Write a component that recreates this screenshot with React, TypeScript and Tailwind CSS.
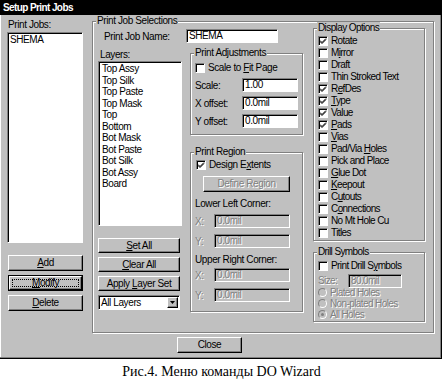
import React from "react";

const raised =
  "bg-[#c0c0c0] border border-t-white border-l-white border-r-black border-b-black shadow-[inset_-1px_-1px_0_#808080]";
const sunken =
  "border border-t-[#808080] border-l-[#808080] border-r-white border-b-white shadow-[inset_1px_1px_0_#000]";
const etched = "border border-[#808080] shadow-[inset_1px_1px_0_#fff,1px_1px_0_#fff]";
const dim = "text-[#808080] [text-shadow:1px_1px_0_#fff]";

const U = ({ children }: { children: React.ReactNode }) => (
  <span className="underline underline-offset-[1px] decoration-1">{children}</span>
);

type Kids = { children?: React.ReactNode; className?: string };

const Group = ({ title, className = "", children }: Kids & { title: string }) => (
  <div className={`relative ${etched} ${className}`}>
    <span className="absolute -top-[7px] left-[3px] bg-[#c0c0c0] px-[1px] leading-[12px]">{title}</span>
    {children}
  </div>
);

const Btn = ({ className = "", children, disabled }: Kids & { disabled?: boolean }) => (
  <div className={`${raised} flex items-center justify-center leading-[12px] ${disabled ? dim : ""} ${className}`}>
    <span className="whitespace-nowrap">{children}</span>
  </div>
);

const Box = ({ checked }: { checked?: boolean }) => (
  <span className={`w-[10px] h-[10px] shrink-0 bg-white ${sunken} flex items-center justify-center`}>
    {checked && (
      <svg width="8" height="8" viewBox="0 0 8 8">
        <path d="M1 3.5 L3 5.5 L7 1.5 M1 4.5 L3 6.5 L7 2.5" stroke="#000" strokeWidth="1" fill="none" />
      </svg>
    )}
  </span>
);

const Check = ({ checked, children, className = "" }: Kids & { checked?: boolean }) => (
  <div className={`flex items-center h-[12px] leading-[12px] ${className}`}>
    <Box checked={checked} />
    <span className="ml-[3px] whitespace-nowrap">{children}</span>
  </div>
);

const Field = ({ value, className = "", disabled }: { value: string; className?: string; disabled?: boolean }) => (
  <div
    className={`h-[14px] ${sunken} ${disabled ? "bg-[#c0c0c0] " + dim : "bg-white"} pl-[2px] leading-[12px] ${className}`}
  >
    {value}
  </div>
);

const Radio = ({ on, children }: Kids & { on?: boolean }) => (
  <div className="flex items-center h-[11px] leading-[11px]">
    <span className="w-[9px] h-[9px] shrink-0 rounded-full border border-t-[#808080] border-l-[#808080] border-r-white border-b-white bg-[#c0c0c0] flex items-center justify-center">
      {on && <span className="w-[3px] h-[3px] rounded-full bg-[#808080]" />}
    </span>
    <span className={`ml-[3px] whitespace-nowrap ${dim}`}>{children}</span>
  </div>
);

const layers = [
  "Top Assy",
  "Top Silk",
  "Top Paste",
  "Top Mask",
  "Top",
  "Bottom",
  "Bot Mask",
  "Bot Paste",
  "Bot Silk",
  "Bot Assy",
  "Board",
];

const options: [boolean, React.ReactNode][] = [
  [true, "Rotate"],
  [false, <>M<U>i</U>rror</>],
  [false, "Draft"],
  [false, "Thin Stroked Text"],
  [true, <>R<U>e</U>fDes</>],
  [true, <><U>T</U>ype</>],
  [true, "Value"],
  [true, <><U>P</U>ads</>],
  [false, <><U>V</U>ias</>],
  [false, <>Pad/Via <U>H</U>oles</>],
  [false, "Pick and Place"],
  [false, <><U>G</U>lue Dot</>],
  [false, <><U>K</U>eepout</>],
  [false, <>C<U>u</U>touts</>],
  [false, <>C<U>o</U>nnections</>],
  [false, "No Mt Hole Cu"],
  [false, "Titles"],
];

export default function App() {
  return (
    <div className="w-[443px] h-[390px] bg-white font-['Liberation_Sans',Arial,sans-serif] text-[10px] tracking-[-0.4px] text-black">
      <div className="w-[442px] h-[359px] bg-[#c0c0c0] border-r border-b border-black shadow-[inset_-1px_-1px_0_#808080,inset_1px_0_0_#fff] flex flex-col">
        <div className="h-[15px] bg-black text-white font-bold pl-[3px] leading-[15px] tracking-[-0.6px]">
          Setup Print Jobs
        </div>

        <div className="flex">
          {/* print jobs column */}
          <div className="ml-[7px] w-[76px] flex flex-col">
            <div className="mt-[4px] h-[12px] leading-[12px] pl-[1px]">Print Jobs:</div>
            <div className={`mt-[1px] h-[211px] bg-white ${sunken} pl-[2px] pt-[1px] leading-[12px]`}>SHEMA</div>
            <Btn className="mt-[12px] h-[16px] ml-[1px]">
              <U>A</U>dd
            </Btn>
            <div className="mt-[4px] h-[16px] ml-[1px] border border-black">
              <div className={`${raised} h-full p-[2px]`}>
                <div className="h-full border border-dotted border-black flex items-center justify-center leading-[10px]">
                  <span>
                    <U>M</U>odify
                  </span>
                </div>
              </div>
            </div>
            <Btn className="mt-[4px] h-[16px] ml-[1px]">
              <U>D</U>elete
            </Btn>
          </div>

          {/* print job selections */}
          <Group title="Print Job Selections" className="ml-[9px] mt-[6px] w-[342px] h-[312px]">
            <div className="flex">
              <div className="ml-[5px] w-[205px] flex flex-col">
                <div className="mt-[7px] h-[14px] flex items-center">
                  <span className="w-[88px] pl-[6px]">Print Job Name:</span>
                  <Field value="SHEMA" className="w-[92px]" />
                </div>
                <div className="flex">
                  <div className="w-[84px] flex flex-col">
                    <div className="mt-[6px] h-[12px] leading-[12px] pl-[2px]">Layers:</div>
                    <div className={`h-[165px] bg-white ${sunken} pl-[3px] pt-[1px] leading-[11.5px]`}>
                      {layers.map((l) => (
                        <div key={l}>{l}</div>
                      ))}
                    </div>
                    <Btn className="mt-[12px] h-[15px] w-[82px]">
                      <U>S</U>et All
                    </Btn>
                    <Btn className="mt-[4px] h-[15px] w-[82px]">
                      <U>C</U>lear All
                    </Btn>
                    <Btn className="mt-[4px] h-[15px] w-[82px]">
                      Apply <U>L</U>ayer Set
                    </Btn>
                    <div className={`mt-[4px] h-[15px] w-[82px] bg-white ${sunken} flex items-center pl-[2px]`}>
                      <span className="flex-1 leading-[12px]">All Layers</span>
                      <span className={`${raised} w-[11px] h-[11px] mr-[1px] flex items-center justify-center`}>
                        <svg width="5" height="3" viewBox="0 0 5 3">
                          <path d="M0 0 H5 L2.5 3 Z" fill="#000" />
                        </svg>
                      </span>
                    </div>
                  </div>

                  <div className="ml-[8px] w-[113px] flex flex-col">
                    <Group title="Print Adjustments" className="mt-[10px] h-[82px]">
                      <div className="pl-[4px] flex flex-col">
                        <Check className="mt-[8px]">
                          Scale to <U>F</U>it Page
                        </Check>
                        <div className="mt-[4px] flex items-center h-[14px]">
                          <span className="w-[47px]">Scale:</span>
                          <Field value="1.00" className="w-[56px]" />
                        </div>
                        <div className="mt-[4px] flex items-center h-[14px]">
                          <span className="w-[47px]">X offset:</span>
                          <Field value="0.0mil" className="w-[56px]" />
                        </div>
                        <div className="mt-[4px] flex items-center h-[14px]">
                          <span className="w-[47px]">Y offset:</span>
                          <Field value="0.0mil" className="w-[56px]" />
                        </div>
                      </div>
                    </Group>
                    <Group title="Print Region" className="mt-[17px] h-[160px]">
                      <div className="pl-[4px] flex flex-col">
                        <Check checked className="mt-[6px] ml-[1px]">
                          Design E<U>x</U>tents
                        </Check>
                        <Btn disabled className="mt-[5px] ml-[8px] w-[87px] h-[16px]">
                          Define Region
                        </Btn>
                        <div className="mt-[6px] h-[12px] leading-[12px]">Lower Left Corner:</div>
                        <div className="mt-[4px] flex items-center h-[14px]">
                          <span className={`w-[19px] ${dim}`}>X:</span>
                          <Field disabled value="0.0mil" className="w-[76px]" />
                        </div>
                        <div className="mt-[6px] flex items-center h-[14px]">
                          <span className={`w-[19px] ${dim}`}>Y:</span>
                          <Field disabled value="0.0mil" className="w-[76px]" />
                        </div>
                        <div className="mt-[6px] h-[12px] leading-[12px]">Upper Right Corner:</div>
                        <div className="mt-[2px] flex items-center h-[14px]">
                          <span className={`w-[19px] ${dim}`}>X:</span>
                          <Field disabled value="0.0mil" className="w-[76px]" />
                        </div>
                        <div className="mt-[6px] flex items-center h-[14px]">
                          <span className={`w-[19px] ${dim}`}>Y:</span>
                          <Field disabled value="0.0mil" className="w-[76px]" />
                        </div>
                      </div>
                    </Group>
                  </div>
                </div>
              </div>

              {/* display options column */}
              <div className="ml-[10px] w-[112px] flex flex-col tracking-[-0.6px]">
                <Group title="Display Options" className="mt-[6px] h-[213px]">
                  <div className="pl-[4px] pt-[6px] flex flex-col">
                    {options.map(([c, l], i) => (
                      <Check key={i} checked={c}>
                        {l}
                      </Check>
                    ))}
                  </div>
                </Group>
                <Group title="Drill Symbols" className="mt-[11px] h-[70px]">
                  <div className="pl-[4px] pt-[7px] flex flex-col">
                    <Check>
                      Print Drill S<U>y</U>mbols
                    </Check>
                    <div className="mt-[2px] flex items-center h-[13px]">
                      <span className={`w-[30px] ${dim}`}>Size:</span>
                      <Field disabled value="80.0mil" className="w-[54px] h-[13px] leading-[11px]" />
                    </div>
                    <Radio>Plated Holes</Radio>
                    <Radio>Non-plated Holes</Radio>
                    <Radio on>All Holes</Radio>
                  </div>
                </Group>
              </div>
            </div>
          </Group>
        </div>

        <Btn className="mt-[4px] ml-[177px] w-[65px] h-[16px]">Close</Btn>
      </div>

      <div className="mt-[6px] h-[14px] leading-[14px] text-center font-['Liberation_Serif','Times_New_Roman',serif] text-[14px] tracking-normal">
        Рис.4. Меню команды DO Wizard
      </div>
    </div>
  );
}
